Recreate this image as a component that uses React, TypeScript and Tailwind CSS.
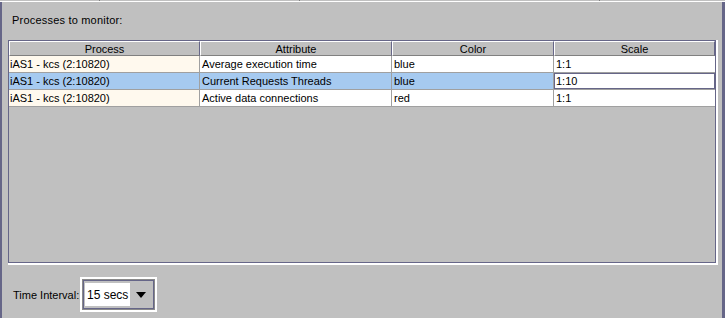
import React from 'react';

const rows = [
  { process: 'iAS1 - kcs (2:10820)', attribute: 'Average execution time', color: 'blue', scale: '1:1' },
  { process: 'iAS1 - kcs (2:10820)', attribute: 'Current Requests Threads', color: 'blue', scale: '1:10', selected: true },
  { process: 'iAS1 - kcs (2:10820)', attribute: 'Active data connections', color: 'red', scale: '1:1' },
];

const headerCell = 'h-full flex items-center justify-center border-t border-l border-t-white border-l-white border-r border-b border-r-[#666688] border-b-[#808080]';

export default function App() {
  return (
    <div className="w-[725px] h-[318px] bg-[#c0c0c0] text-black text-[11px] leading-[14px] font-['Liberation_Sans',Arial,sans-serif] flex flex-col overflow-hidden">
      {/* strip of the panel above, cut off */}
      <div className="h-[2px] flex border-b border-white shrink-0">
        <div className="w-[100px] border-r border-[#808080]" />
        <div className="w-[200px] border-r border-[#808080]" />
        <div className="w-[300px] border-r border-[#808080]" />
        <div className="flex-1" />
      </div>

      <div className="flex-1 flex flex-col border-l-2 border-r-[3px] border-[#666688] pl-[6px] pr-[4px] pt-[11px]">
        <div className="pl-[4px] tracking-[0.2px]">Processes to monitor:</div>

        {/* table panel */}
        <div className="mt-[13px] border-r-2 border-b-2 border-white">
          <div className="h-[223px] border border-[#666688] flex flex-col">
            <div className="h-[15px] flex shrink-0">
              <div className={`w-[191px] ${headerCell}`}>Process</div>
              <div className={`w-[192px] ${headerCell}`}>Attribute</div>
              <div className={`w-[162px] ${headerCell}`}>Color</div>
              <div className={`flex-1 ${headerCell}`}>Scale</div>
            </div>
            {rows.map((r, i) => (
              <div key={i} className={`h-[17px] flex border-b border-[#a0a0a0] ${r.selected ? 'bg-[#a6caf0]' : 'bg-white'}`}>
                <div className={`w-[191px] pl-[1px] flex items-center border-r border-[#a0a0a0] ${r.selected ? '' : 'bg-[#fff9ee]'}`}>{r.process}</div>
                <div className="w-[192px] pl-[2px] flex items-center border-r border-[#a0a0a0]">{r.attribute}</div>
                <div className="w-[162px] pl-[2px] flex items-center border-r border-[#a0a0a0]">{r.color}</div>
                {r.selected ? (
                  <div className="flex-1 flex items-center pl-[1px] bg-white border border-[#666688]">{r.scale}</div>
                ) : (
                  <div className="flex-1 flex items-center pl-[2px]">{r.scale}</div>
                )}
              </div>
            ))}
          </div>
        </div>

        {/* time interval */}
        <div className="mt-[12px] ml-[5px] flex items-center">
          <span className="w-[67px]">Time Interval:</span>
          <div className="border-2 border-white">
            <div className="border border-[#8a8a8a]">
              <div className="w-[71px] h-[29px] border border-[#666688] flex items-center px-px">
                <div className="w-[45px] h-[23px] bg-white flex items-center pl-[2px] text-[12px]">15 secs</div>
                <div className="flex-1 flex items-center justify-center">
                  <svg width="10" height="6" viewBox="0 0 10 6">
                    <polygon points="0,0 10,0 5,6" fill="#000" />
                  </svg>
                </div>
              </div>
            </div>
          </div>
        </div>
      </div>
    </div>
  );
}
